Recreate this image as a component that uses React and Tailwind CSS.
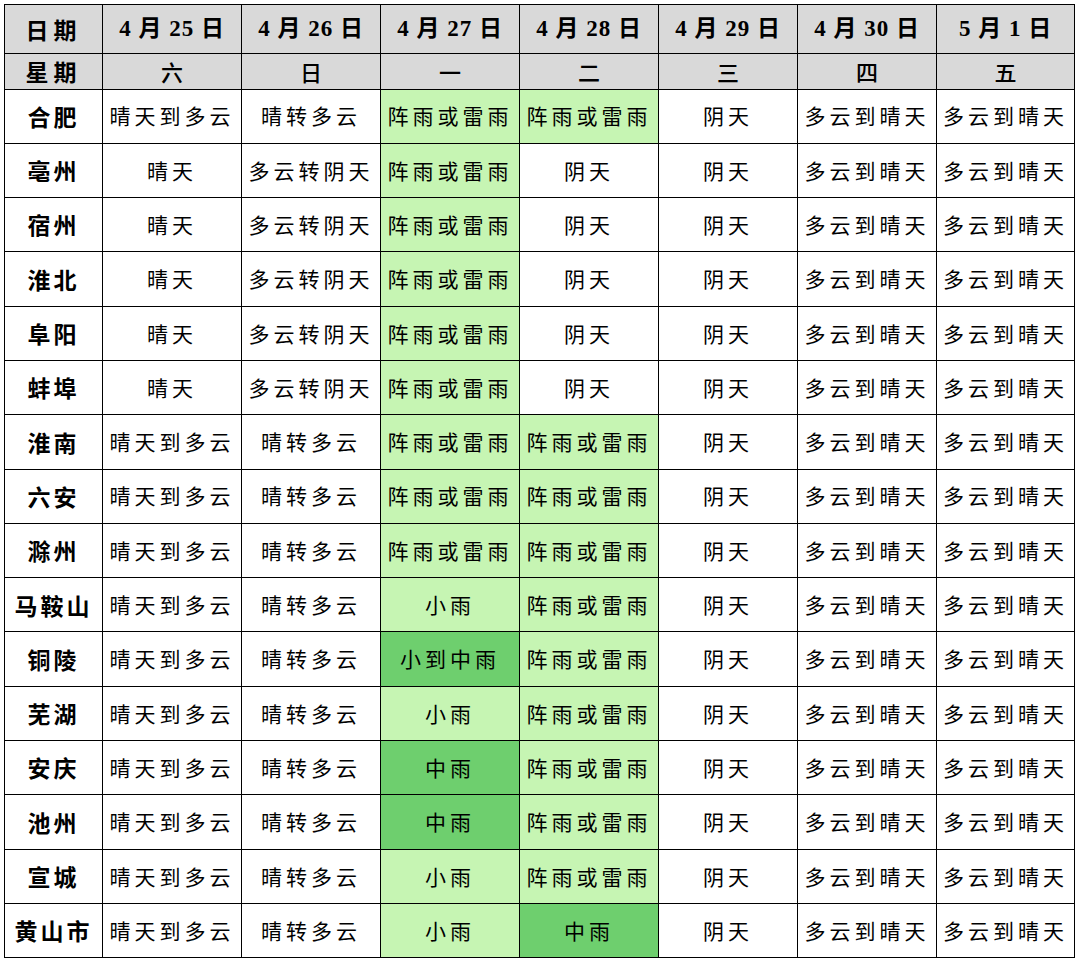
const dates = ["4 月 25 日", "4 月 26 日", "4 月 27 日", "4 月 28 日", "4 月 29 日", "4 月 30 日", "5 月 1 日"];
const weekdays = ["六", "日", "一", "二", "三", "四", "五"];

// L = light green, D = dark green
const rows = [
  ["合肥", "晴天到多云", "晴转多云", ["阵雨或雷雨", "L"], ["阵雨或雷雨", "L"], "阴天", "多云到晴天", "多云到晴天"],
  ["亳州", "晴天", "多云转阴天", ["阵雨或雷雨", "L"], "阴天", "阴天", "多云到晴天", "多云到晴天"],
  ["宿州", "晴天", "多云转阴天", ["阵雨或雷雨", "L"], "阴天", "阴天", "多云到晴天", "多云到晴天"],
  ["淮北", "晴天", "多云转阴天", ["阵雨或雷雨", "L"], "阴天", "阴天", "多云到晴天", "多云到晴天"],
  ["阜阳", "晴天", "多云转阴天", ["阵雨或雷雨", "L"], "阴天", "阴天", "多云到晴天", "多云到晴天"],
  ["蚌埠", "晴天", "多云转阴天", ["阵雨或雷雨", "L"], "阴天", "阴天", "多云到晴天", "多云到晴天"],
  ["淮南", "晴天到多云", "晴转多云", ["阵雨或雷雨", "L"], ["阵雨或雷雨", "L"], "阴天", "多云到晴天", "多云到晴天"],
  ["六安", "晴天到多云", "晴转多云", ["阵雨或雷雨", "L"], ["阵雨或雷雨", "L"], "阴天", "多云到晴天", "多云到晴天"],
  ["滁州", "晴天到多云", "晴转多云", ["阵雨或雷雨", "L"], ["阵雨或雷雨", "L"], "阴天", "多云到晴天", "多云到晴天"],
  ["马鞍山", "晴天到多云", "晴转多云", ["小雨", "L"], ["阵雨或雷雨", "L"], "阴天", "多云到晴天", "多云到晴天"],
  ["铜陵", "晴天到多云", "晴转多云", ["小到中雨", "D"], ["阵雨或雷雨", "L"], "阴天", "多云到晴天", "多云到晴天"],
  ["芜湖", "晴天到多云", "晴转多云", ["小雨", "L"], ["阵雨或雷雨", "L"], "阴天", "多云到晴天", "多云到晴天"],
  ["安庆", "晴天到多云", "晴转多云", ["中雨", "D"], ["阵雨或雷雨", "L"], "阴天", "多云到晴天", "多云到晴天"],
  ["池州", "晴天到多云", "晴转多云", ["中雨", "D"], ["阵雨或雷雨", "L"], "阴天", "多云到晴天", "多云到晴天"],
  ["宣城", "晴天到多云", "晴转多云", ["小雨", "L"], ["阵雨或雷雨", "L"], "阴天", "多云到晴天", "多云到晴天"],
  ["黄山市", "晴天到多云", "晴转多云", ["小雨", "L"], ["中雨", "D"], "阴天", "多云到晴天", "多云到晴天"],
];

const serif = "font-['Liberation_Serif','Noto_Sans_CJK_SC',serif]";
const sans = "font-['Noto_Sans_CJK_SC',sans-serif]";

export default function App() {
  return (
    <div className="bg-white w-[1077px] h-[962px] pt-[4px] pl-[4px]">
      <table className="border-collapse table-fixed w-[1070px] border-[1.5px] border-black text-black">
        <colgroup>
          <col className="w-[98px]" />
          <col className="w-[139px]" />
          <col className="w-[139px]" />
          <col className="w-[139px]" />
          <col className="w-[139px]" />
          <col className="w-[139px]" />
          <col className="w-[139px]" />
          <col className="w-[138px]" />
        </colgroup>
        <thead>
          <tr className="h-[49px] bg-[#d9d9d9]">
            <th className={`border-[1.5px] border-black text-[23px] font-semibold tracking-[5px] ${sans}`}>日期</th>
            {dates.map((d) => (
              <th key={d} className={`border-[1.5px] border-black text-[23px] font-bold tracking-[1px] whitespace-pre ${serif}`}>{d}</th>
            ))}
          </tr>
          <tr className="h-[35px] bg-[#d9d9d9]">
            <th className={`border-[1.5px] border-black text-[23px] font-semibold tracking-[5px] ${sans}`}>星期</th>
            {weekdays.map((w) => (
              <th key={w} className={`border-[1.5px] border-black text-[22px] font-medium ${sans}`}>{w}</th>
            ))}
          </tr>
        </thead>
        <tbody>
          {rows.map((r) => (
            <tr key={r[0]} className="h-[54.3px]">
              <td className={`border-[1.5px] border-black text-center text-[23px] font-semibold tracking-[3px] ${sans}`}>{r[0]}</td>
              {r.slice(1).map((c, i) => {
                const text = Array.isArray(c) ? c[0] : c;
                const tone = Array.isArray(c) ? c[1] : null;
                const bg = tone === "L" ? "bg-[#c6f5b3]" : tone === "D" ? "bg-[#6ecf6e]" : "bg-white";
                return (
                  <td key={i} className={`border-[1.5px] border-black text-center text-[21px] tracking-[4px] whitespace-nowrap ${bg} ${sans}`}>
                    {text}
                  </td>
                );
              })}
            </tr>
          ))}
        </tbody>
      </table>
    </div>
  );
}
